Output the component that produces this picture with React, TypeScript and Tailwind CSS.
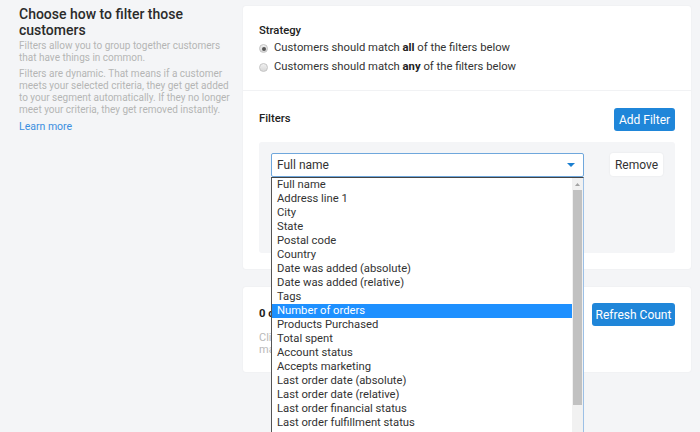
import React from 'react';

const options = [
  'Full name',
  'Address line 1',
  'City',
  'State',
  'Postal code',
  'Country',
  'Date was added (absolute)',
  'Date was added (relative)',
  'Tags',
  'Number of orders',
  'Products Purchased',
  'Total spent',
  'Account status',
  'Accepts marketing',
  'Last order date (absolute)',
  'Last order date (relative)',
  'Last order financial status',
  'Last order fulfillment status',
  'Last order shipping country',
  'Order count',
];

const Radio: React.FC<{ checked?: boolean }> = ({ checked }) => (
  <span className="mr-[6px] flex h-[9px] w-[9px] items-center justify-center rounded-full border border-[#c4c4c4] bg-gradient-to-b from-[#f0f0f0] to-[#d8d8d8]">
    {checked && <span className="h-[4px] w-[4px] rounded-full bg-[#555]" />}
  </span>
);

const App: React.FC = () => {
  return (
    <div className="flex h-[432px] w-[700px] overflow-hidden bg-[#f4f5f7] font-['Roboto',sans-serif] text-[#333]">
      {/* left column */}
      <div className="w-[243px] shrink-0 pl-[19px] pt-[6px]">
        <div className="w-[215px] whitespace-nowrap">
          <h2 className="text-[14px] font-medium leading-[16px] text-[#2b2b2b]">
            Choose how to filter those
            <br />
            customers
          </h2>
          <p className="mt-[2px] text-[10px] leading-[12px] text-[#b5b5b5]">
            Filters allow you to group together customers
            <br />
            that have things in common.
          </p>
          <p className="mt-[4px] text-[10px] leading-[12px] text-[#b5b5b5]">
            Filters are dynamic. That means if a customer
            <br />
            meets your selected criteria, they get get added
            <br />
            to your segment automatically. If they no longer
            <br />
            meet your criteria, they get removed instantly.
          </p>
          <a className="mt-[5px] block text-[10.5px] leading-[12px] text-[#3b8fe0]">Learn more</a>
        </div>
      </div>

      {/* right column */}
      <div className="w-[448px] shrink-0 pt-[6px] text-[11.25px]">
        <div className="rounded-[3px] bg-white shadow-[0_0_2px_rgba(0,0,0,0.06)]">
          <div className="border-b border-[#f1f2f4] px-[16px] pt-[17px] pb-[13px]">
            <div className="font-medium leading-[16px] text-[#222]">Strategy</div>
            <label className="flex h-[19px] items-center">
              <Radio checked />
              <span>
                Customers should match <b className="font-bold text-[#222]">all</b> of the filters below
              </span>
            </label>
            <label className="flex h-[19px] items-center">
              <Radio />
              <span>
                Customers should match <b className="font-bold text-[#222]">any</b> of the filters below
              </span>
            </label>
          </div>

          <div className="px-[16px] pt-[17px] pb-[16px]">
            <div className="flex h-[23px] items-center justify-between">
              <span className="font-medium text-[#222]">Filters</span>
              <button className="h-[23px] w-[61px] rounded-[3px] bg-[#1f86d9] text-[12px] text-white">
                Add Filter
              </button>
            </div>

            <div className="mt-[11px] h-[111px] rounded-[3px] bg-[#f4f5f7] px-[12px] pt-[11px]">
              <div className="flex items-start gap-[26px]">
                <div className="relative flex-1">
                  <div className="flex h-[24px] items-center justify-between rounded-[2px] border border-[#6fa7dc] bg-white pl-[5px] pr-[6px] text-[12px] text-[#333]">
                    <span>Full name</span>
                    <svg width="8" height="4" viewBox="0 0 8 4" className="mr-[2px]">
                      <path d="M0 0h8L4 4z" fill="#1b7fd0" />
                    </svg>
                  </div>

                  {/* open native-like dropdown list */}
                  <div className="absolute left-0 top-full z-10 flex w-[313px] border-l border-t border-l-[#555] border-t-[#444] border-r border-r-[#9cc0e6] bg-white">
                    <ul className="flex-1">
                      {options.map((o) => (
                        <li
                          key={o}
                          className={
                            o === 'Number of orders'
                              ? 'h-[14px] bg-[#1e90ff] pl-[5px] leading-[14px] text-white'
                              : 'h-[14px] pl-[5px] leading-[14px] text-[#333]'
                          }
                        >
                          {o}
                        </li>
                      ))}
                    </ul>
                    <div className="flex w-[11px] flex-col bg-[#f1f1f1]">
                      <div className="flex h-[12px] items-center justify-center">
                        <svg width="5" height="3" viewBox="0 0 5 3">
                          <path d="M0 3h5L2.5 0z" fill="#a3a3a3" />
                        </svg>
                      </div>
                      <div className="mx-[1px] h-[215px] bg-[#c1c1c1]" />
                    </div>
                  </div>
                </div>
                <button className="h-[23px] w-[53px] rounded-[3px] bg-white text-[12px] text-[#333] shadow-[0_0_2px_rgba(0,0,0,0.08)]">
                  Remove
                </button>
              </div>
            </div>
          </div>
        </div>

        <div className="mt-[18px] rounded-[3px] bg-white px-[16px] pt-[16px] pb-[16px] shadow-[0_0_2px_rgba(0,0,0,0.06)]">
          <div className="flex h-[23px] items-center justify-between">
            <span className="font-bold text-[#222]">0 customers match your filters</span>
            <button className="h-[23px] w-[83px] rounded-[3px] bg-[#1f86d9] text-[12px] text-white">
              Refresh Count
            </button>
          </div>
          <p className="mt-[6px] whitespace-nowrap text-[11px] leading-[12px] text-[#b9b9b9]">
            Click Refresh Count to see how many customers
            <br />
            match your filters right now.
          </p>
        </div>
      </div>
    </div>
  );
};

export default App;
